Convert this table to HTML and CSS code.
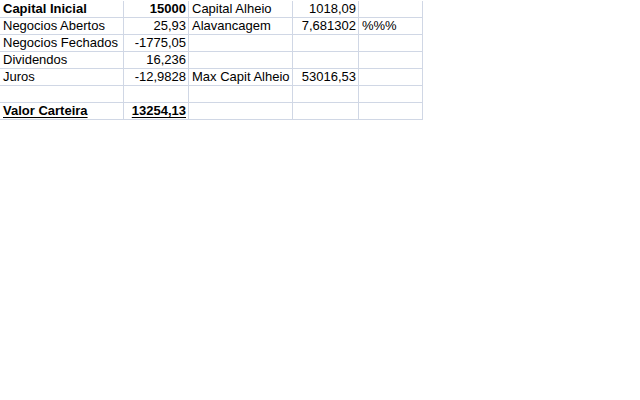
FILE: index.html
```html
<!DOCTYPE html>
<html>
<head>
<meta charset="utf-8">
<link rel="stylesheet" href="styles.css">
</head>
<body>
<div class="sheet">
  <div class="c c1 b">Capital Inicial</div>
  <div class="c c2 n b">15000</div>
  <div class="c c3">Capital Alheio</div>
  <div class="c c4 n">1018,09</div>
  <div class="c c5"></div>

  <div class="c c1">Negocios Abertos</div>
  <div class="c c2 n">25,93</div>
  <div class="c c3">Alavancagem</div>
  <div class="c c4 n">7,681302</div>
  <div class="c c5">%%%</div>

  <div class="c c1">Negocios Fechados</div>
  <div class="c c2 n">-1775,05</div>
  <div class="c c3"></div>
  <div class="c c4"></div>
  <div class="c c5"></div>

  <div class="c c1">Dividendos</div>
  <div class="c c2 n">16,236</div>
  <div class="c c3"></div>
  <div class="c c4"></div>
  <div class="c c5"></div>

  <div class="c c1">Juros</div>
  <div class="c c2 n">-12,9828</div>
  <div class="c c3">Max Capit Alheio</div>
  <div class="c c4 n">53016,53</div>
  <div class="c c5"></div>

  <div class="c c1"></div>
  <div class="c c2"></div>
  <div class="c c3"></div>
  <div class="c c4"></div>
  <div class="c c5"></div>

  <div class="c c1 b u">Valor Carteira</div>
  <div class="c c2 n b u">13254,13</div>
  <div class="c c3"></div>
  <div class="c c4"></div>
  <div class="c c5"></div>
</div>
</body>
</html>
```
FILE: styles.css
```css
html, body {
  margin: 0;
  padding: 0;
  background: #ffffff;
}
body {
  font-family: "Liberation Sans", Arial, sans-serif;
  font-size: 13px;
  color: #000000;
}
.sheet {
  display: grid;
  grid-template-columns: 124px 65px 104px 66px 64px;
  grid-auto-rows: 17px;
  width: 423px;
  padding-top: 1px;
}
.c {
  box-sizing: border-box;
  border-right: 1px solid #d0d7e5;
  border-bottom: 1px solid #d0d7e5;
  padding: 0 2px 0 3px;
  line-height: 16px;
  white-space: nowrap;
  overflow: visible;
}
.n {
  text-align: right;
}
.b {
  font-weight: bold;
}
.u {
  text-decoration: underline;
  text-underline-offset: 2px;
}
```
